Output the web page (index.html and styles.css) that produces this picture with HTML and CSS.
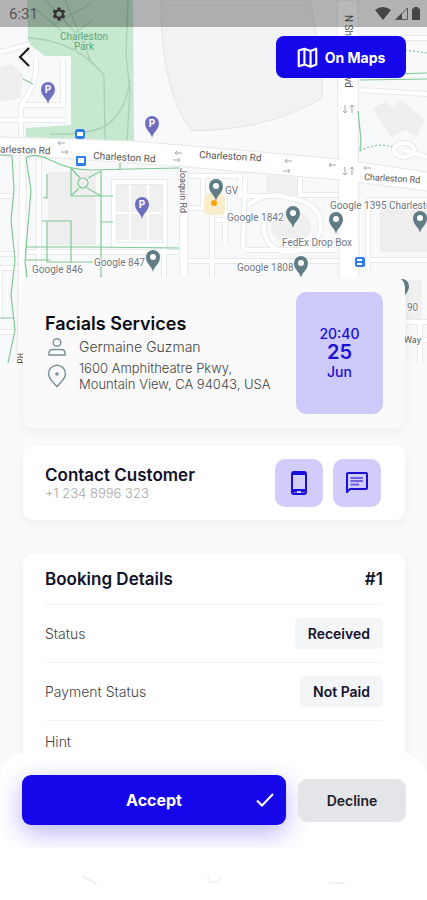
FILE: index.html
```html
<!DOCTYPE html>
<html lang="en">
<head>
<meta charset="UTF-8">
<meta name="viewport" content="width=device-width, initial-scale=1.0">
<title>Booking Details</title>
<link rel="stylesheet" href="styles.css">
</head>
<body>
<div class="app">
    <main class="content">
        <svg class="map" viewBox="0 0 427 363" preserveAspectRatio="xMidYMin slice" aria-hidden="true">
            <rect width="427" height="363" fill="#f8f9fb"/>
            <!-- blocks -->
            <path d="M161 0 Q160 90 192 131 L213 130 Q275 126 322 98 L322 60 L310 0 Z" fill="#f1f2f4" stroke="#e3e4e6"/>
            <path d="M0 67 L12 64 L24 76 L20 98 L0 102 Z M48 172 h48 v73 h-48 Z M380 208 h47 v44 h-47 Z M373 108 l12 -6 l8 6 l8 -8 l24 20 l-8 16 l-12 -6 l-14 8 l-14 -22 Z" fill="#eeeeef"/>
            <rect x="116" y="184" width="46" height="56" fill="#f0f0f0"/>
            <ellipse cx="291" cy="227" rx="20" ry="17" fill="#efefef"/>
            <rect x="266" y="166" width="34" height="30" fill="#f1f1f1"/>
            <path d="M377 280 h45 v45 h-45 Z" fill="#eff1f1"/>
            <!-- park -->
            <path d="M27 0 H133 L134 141 L26 137 V128 L71 125 V56 H45 L28 43 Z" fill="#c5e8cf"/>
            <g fill="none" stroke="#a9cfb4" stroke-width="1.3">
                <path d="M28 38 Q75 40 104 75 L105 141 M128 0 L126 55 L130 90 L127 141 M130 80 C126 110 112 126 95 130 Q75 135 50 134"/>
                <path d="M35 8 L80 47 M45 0 L88 46 M65 0 L92 64 M55 24 L90 4 M70 36 L93 20"/>
            </g>
            <!-- small roads -->
            <g fill="none" stroke="#e9eaec" stroke-width="6">
                <path d="M0 52 L30 44 M36 58 Q38 85 21 105 V136 M21 105 H63 V60 M0 120 H65 M21 120 H66"/>
                <path d="M39 158 V277 M0 196 H14 M0 254 H18 M0 268 H22 M0 332 H18 M26 252 H180 M0 270 V318"/>
                <path d="M114 182 H165 V245 H114 Z M164 245 V277 M187 208 H212 V277 M189 261 H340 M203 176 V208 M187 176 H240 V196 H280"/>
                <path d="M248 205 Q268 190 288 198 Q322 202 321 228 Q316 252 286 252 Q260 248 264 214 M245 180 L243 248 M245 250 H336 M225 196 V245 M215 220 H243 M300 170 V195 H338 M300 170 H242"/>
                <path d="M366 200 H427 M368 198 V272 M360 260 H427 M360 90 L427 94 M358 38 H427 M404 150 L427 157 M404 281 V340 M420 322 V363 M404 340 H427 M405 322 H427"/>
                <ellipse cx="404" cy="150" rx="10" ry="7"/>
            </g>
            <g fill="none" stroke="#fff" stroke-width="4">
                <path d="M0 52 L30 44 M36 58 Q38 85 21 105 V136 M21 105 H63 V60 M0 120 H65 M21 120 H66"/>
                <path d="M39 158 V277 M0 196 H14 M0 254 H18 M0 268 H22 M0 332 H18 M26 252 H180 M0 270 V318"/>
                <path d="M114 182 H165 V245 H114 Z M164 245 V277 M187 208 H212 V277 M189 261 H340 M203 176 V208 M187 176 H240 V196 H280"/>
                <path d="M248 205 Q268 190 288 198 Q322 202 321 228 Q316 252 286 252 Q260 248 264 214 M245 180 L243 248 M245 250 H336 M225 196 V245 M215 220 H243 M300 170 V195 H338 M300 170 H242"/>
                <path d="M366 200 H427 M368 198 V272 M360 260 H427 M360 90 L427 94 M358 38 H427 M404 150 L427 157 M404 281 V340 M420 322 V363 M404 340 H427 M405 322 H427"/>
                <ellipse cx="404" cy="150" rx="10" ry="7"/>
            </g>
            <path d="M130 185 V240 M148 185 V240 M116 213 H162" stroke="#fff" stroke-width="1.5"/>
            <!-- main roads -->
            <path d="M0 137 L134 141 L340 159 L427 172 V191 L340 180 L187 167 L0 154 Z M337 0 H358 L359 290 H339 Z M20 154 H26 V363 H17 Z M179 166 H188 V290 H180 Z" fill="#fff" stroke="#e6e7ea"/>
            <path d="M0 138 L134 142 L340 160 L427 173 V190 L340 179 L187 166 L0 153 Z M340 150 H358 V190 H340 Z" fill="#fff"/>
            <!-- footpaths -->
            <g fill="none" stroke="#81c995" stroke-width="1.2">
                <path d="M0 155 L12 156 L14 190 L11 220 L15 260 L11 295 L15 330 L8 363 M0 318 H14"/>
                <path d="M26 158 L31 190 L28 225 L25 262 L27 277 M26 158 Q34 152 50 160 Q70 170 90 170 L130 169 L179 168"/>
                <path d="M71 168 L80 178 M101 171 L88 178 M71 168 V196 H113 M71 196 L79 188 M101 196 L87 188 M101 171 V277 M42 221 H71 V263 M47 174 V198 L43 197 M47 221 V262 H93 M26 247 H90 L179 248 M26 260 H50 M101 222 H113 M120 163 V170"/>
                <circle cx="83" cy="183" r="5"/>
                <path d="M23 79 L33 84 M358 111 L361 140 L360 151 M355 75 L427 73 M360 80 L427 79"/>
                <path d="M360 151 Q376 142 392 147 M405 50 L427 53" stroke-dasharray="2 2"/>
            </g>
            <!-- one way arrows -->
            <g fill="none" stroke="#a3a7b4">
                <path d="M65 143 H58 l2 -2 m-2 2 l2 2 M61 152 h7 l-2 -2 m2 2 l-2 2 M182 153 h-7 l2 -2 m-2 2 l2 2 M173 160 h7 l-2 -2 m2 2 l-2 2 M292 161 h-7 l2 -2 m-2 2 l2 2 M283 171 h7 l-2 -2 m2 2 l-2 2 M336 165 h-7 l2 -2 m-2 2 l2 2 M371 168 h-7 l2 -2 m-2 2 l2 2"/>
                <path d="M345 105 v8 l-2 -2 m2 2 l2 -2 M352 113 v-8 l-2 2 m2 -2 l2 2 M345 167 v8 l-2 -2 m2 2 l2 -2 M352 175 v-8 l-2 2 m2 -2 l2 2"/>
            </g>
            <rect x="204" y="194" width="21" height="21" rx="5" fill="#f9edcc"/>
            <circle cx="214" cy="203" r="3" fill="#f4a60b"/>
            <!-- labels -->
            <g class="park-label">
                <text x="84" y="40">Charleston</text>
                <text x="84" y="50">Park</text>
            </g>
            <g class="road-label">
                <text transform="translate(-12 152) rotate(2)">Charleston Rd</text>
                <text transform="translate(93 159) rotate(3)">Charleston Rd</text>
                <text transform="translate(199 158) rotate(3)">Charleston Rd</text>
                <text class="small" transform="translate(364 180) rotate(3)">Charleston Rd</text>
                <text transform="translate(345 15) rotate(90)">N Shoreline Blvd</text>
                <text class="small" transform="translate(180 168) rotate(90)">Joaquin Rd</text>
                <text class="small" transform="translate(17 353) rotate(90)">Rd</text>
                <text class="small" x="404" y="343">Way</text>
            </g>
            <g class="place-label">
                <text x="225" y="194">GV</text>
                <text x="227" y="221">Google 1842</text>
                <text x="282" y="246">FedEx Drop Box</text>
                <text x="330" y="209">Google 1395 Charleston</text>
                <text x="237" y="271">Google 1808</text>
                <text x="94" y="266">Google 847</text>
                <text x="32" y="273">Google 846</text>
                <text x="407" y="311">90</text>
            </g>
            <!-- pins -->
            <defs>
                <path id="pin" d="M0 12 C-1 6 -7 4 -7 -3 A7 7 0 0 1 7 -3 C7 4 1 6 0 12 Z"/>
            </defs>
            <g fill="#6f6fc0">
                <use href="#pin" x="48" y="92"/>
                <use href="#pin" x="152" y="126"/>
                <use href="#pin" x="142" y="207"/>
            </g>
            <g class="pin-letter">
                <text x="48" y="93">P</text>
                <text x="152" y="127">P</text>
                <text x="142" y="208">P</text>
            </g>
            <g fill="#607d86">
                <use href="#pin" x="216" y="189"/>
                <use href="#pin" x="293" y="216"/>
                <use href="#pin" x="336" y="222"/>
                <use href="#pin" x="420" y="221"/>
                <use href="#pin" x="301" y="266"/>
                <use href="#pin" x="153" y="260"/>
                <use href="#pin" x="402" y="289"/>
            </g>
            <g fill="#fff">
                <circle cx="216" cy="186" r="3"/>
                <circle cx="293" cy="213" r="3"/>
                <circle cx="336" cy="219" r="3"/>
                <circle cx="420" cy="218" r="3"/>
                <circle cx="301" cy="263" r="3"/>
                <circle cx="153" cy="257" r="3"/>
            </g>
            <!-- transit stops -->
            <g fill="#2f7de9">
                <rect x="75" y="129" width="10" height="10" rx="3"/>
                <rect x="76" y="156" width="10" height="10" rx="1"/>
                <rect x="355" y="257" width="10" height="10" rx="2"/>
            </g>
            <path d="M77 132 h6 v4 h-6 Z M78 158 h6 v5 h-6 Z M357 259 h5 v2 h-5 Z M357 263 h5 v2 h-5 Z" fill="#fff"/>
        </svg>

        <div class="status-bar">
            <span class="time">6:31</span>
            <svg width="14" height="14" viewBox="0 0 24 24" fill="#333" fill-rule="evenodd">
                <path d="M9.500 1h5l.6 3.300 2 1.200 3.200-1.200 2.500 4.400-2.600 2.100v2.400l2.600 2.100-2.500 4.400-3.200-1.200-2 1.200-.6 3.300h-5l-.6-3.300-2-1.200-3.200 1.200-2.500-4.400 2.600-2.100v-2.400L1.200 8.700l2.500-4.400 3.200 1.200 2-1.200Z M12 7.500a4.500 4.500 0 1 0 0 9 4.500 4.500 0 0 0 0-9Z"/>
            </svg>
            <div class="signals">
                <svg width="16" height="13" viewBox="0 0 16 13" fill="#444"><path d="M0 3 Q8 -3 16 3 L8 13 Z"/></svg>
                <svg width="13" height="13" viewBox="0 0 13 13"><path d="M0 13 L7 6 V13 Z" fill="#444"/><path d="M1 12.500 L12.500 1 V12.500 Z" fill="none" stroke="#555"/></svg>
                <svg width="8" height="13" viewBox="0 0 8 13" fill="#444"><path d="M2 0 H6 V1.500 H8 V13 H0 V1.500 H2 Z"/></svg>
            </div>
        </div>

        <header class="top-bar">
            <button class="back-button" aria-label="Back">
                <svg width="12" height="20" viewBox="0 0 12 20" fill="none" stroke="#111" stroke-width="2"><path d="M11 1 L2 10 L11 19"/></svg>
            </button>
            <button class="maps-button">
                <svg width="21" height="21" viewBox="0 0 24 24" fill="none" stroke="#fff" stroke-width="2.500" stroke-linejoin="round"><path d="M2 4 L8.500 2 L15.500 4.500 L22 2 V20 L15.500 22.500 L8.500 20 L2 22 Z M8.500 2 V20 M15.500 4.500 V22.500"/></svg>
                On Maps
            </button>
        </header>

        <section class="card service-card">
            <div class="service-info">
                <h1>Facials Services</h1>
                <div class="info-row">
                    <svg width="20" height="20" viewBox="0 0 20 20" fill="none" stroke="#7b929b" stroke-width="1.500"><circle cx="10" cy="5.500" r="3.800"/><path d="M2 18 V16 Q2 12.500 6 12.500 H14 Q18 12.500 18 16 V18 Z"/></svg>
                    <span class="customer-name">Germaine Guzman</span>
                </div>
                <div class="info-row">
                    <svg width="20" height="24" viewBox="0 0 20 24" fill="none" stroke="#7b929b" stroke-width="1.500"><path d="M10 22.500 C7 19 1.500 15 1.500 9.800 A8.500 8.500 0 0 1 18.500 9.800 C18.500 15 13 19 10 22.500 Z"/><circle cx="10" cy="10" r="1.800" fill="#7b929b" stroke="none"/></svg>
                    <span>1600 Amphitheatre Pkwy,<br>Mountain View, CA 94043, USA</span>
                </div>
            </div>
            <div class="date-box">
                <span>20:40</span>
                <strong>25</strong>
                <span>Jun</span>
            </div>
        </section>

        <section class="card contact-card">
            <div class="contact-info">
                <h2>Contact Customer</h2>
                <p>+1 234 8996 323</p>
            </div>
            <button class="icon-button" aria-label="Call">
                <svg width="24" height="26" viewBox="0 0 24 26" fill="none" stroke="#1b0ed6" stroke-width="2"><rect x="5" y="2" width="14" height="22" rx="2"/><path d="M5 4 H19 M5 20 H19" /><path d="M6 21.500 H10 M14 21.500 H18"/></svg>
            </button>
            <button class="icon-button" aria-label="Message">
                <svg width="24" height="24" viewBox="0 0 24 24" fill="none" stroke="#1b0ed6" stroke-width="2" stroke-linejoin="round"><path d="M2 21 V3 Q2 2 3 2 H21 Q22 2 22 3 V17 Q22 18 21 18 H5 Z"/><path d="M5.500 7 H18 M5.500 10 H18 M5.500 13.500 H14" stroke="#6b62e0"/></svg>
            </button>
        </section>

        <section class="card booking-card">
            <div class="booking-header">
                <h2>Booking Details</h2>
                <h2>#1</h2>
            </div>
            <div class="booking-row">
                <span>Status</span>
                <span class="badge">Received</span>
            </div>
            <div class="booking-row">
                <span>Payment Status</span>
                <span class="badge">Not Paid</span>
            </div>
            <div class="booking-row hint-row">
                <span>Hint</span>
            </div>
        </section>
    </main>

    <footer class="actions">
        <button class="accept-button">
            <span>Accept</span>
            <svg width="18" height="14" viewBox="0 0 18 14" fill="none" stroke="#fff" stroke-width="2"><path d="M1 7.500 L6 12.500 L17 1"/></svg>
        </button>
        <button class="decline-button">Decline</button>
    </footer>

    <div class="system-nav">
        <svg width="16" height="10" viewBox="0 0 16 10"><path d="M0 1 L15 9"/></svg>
        <svg width="16" height="10" viewBox="0 0 16 10"><path d="M2 2 Q2 7 6 7 H10 Q14 7 14 2"/></svg>
        <svg width="16" height="10" viewBox="0 0 16 10"><path d="M0 7 Q0 8 2 8 H14 Q16 8 16 7"/></svg>
    </div>
</div>
</body>
</html>
```
FILE: styles.css
```css
* {
    box-sizing: border-box;
}

body {
    margin: 0;
    font-family: Inter, sans-serif;
    font-size: 14px;
    color: #12122b;
    background-color: #fafafa;
}

h1, h2, p {
    margin: 0;
}

h1, h2 {
    font-size: 17px;
    line-height: 20px;
    font-weight: 600;
}

h1 {
    font-size: 18px;
    color: #0b0b14;
}

button {
    border: none;
    padding: 0;
    font-family: inherit;
    cursor: pointer;
}

svg {
    display: block;
    flex-shrink: 0;
}

.app {
    display: flex;
    flex-direction: column;
    height: 100vh;
}

.content {
    position: relative;
    flex: 1;
    min-height: 0;
    margin-bottom: -28px;
    overflow-y: auto;
    scrollbar-width: none;
}

/* map lies behind the header and the first card */
.map {
    position: absolute;
    top: 0;
    left: 0;
    width: 100%;
    height: 363px;
    z-index: -1;
}

.map text {
    font-family: Roboto, sans-serif;
    font-size: 10px;
    fill: #6f7680;
    stroke: #fff;
    stroke-width: 2px;
    paint-order: stroke;
}

.map .road-label text {
    fill: #555;
}

.map .road-label .small {
    font-size: 9px;
}

.map .park-label text {
    fill: #5fa779;
    stroke: #c5e8cf;
    text-anchor: middle;
}

.map .pin-letter text {
    fill: #fff;
    stroke: none;
    font-weight: 700;
    text-anchor: middle;
}

.status-bar {
    display: flex;
    align-items: center;
    gap: 14px;
    height: 27px;
    padding: 0 7px 0 9px;
    background-color: rgba(0, 0, 0, 0.28);
}

.time {
    font-family: Roboto, sans-serif;
    font-size: 15px;
    color: #555;
}

.signals {
    display: flex;
    gap: 4px;
    margin-left: auto;
}

.top-bar {
    display: flex;
    justify-content: space-between;
    align-items: center;
    padding: 9px 21px 0 18px;
    margin-bottom: 199px;
}

.back-button {
    background: none;
}

.maps-button {
    display: flex;
    justify-content: center;
    align-items: center;
    gap: 7px;
    width: 130px;
    height: 42px;
    border-radius: 8px;
    background-color: #1607ea;
    color: #fff;
    font-size: 14px;
    font-weight: 700;
}

.card {
    margin: 0 22px 18px 23px;
    padding: 0 22px;
    border-radius: 10px;
    background-color: #fff;
    box-shadow: 0 4px 12px rgba(0, 0, 0, 0.05);
}

.service-card {
    display: flex;
    justify-content: space-between;
    align-items: center;
    gap: 10px;
    min-height: 151px;
    background-color: #fafafa;
}

.service-info {
    flex: 1;
    white-space: nowrap;
}

.info-row {
    display: flex;
    align-items: center;
    gap: 12px;
    margin-top: 3px;
    padding-left: 2px;
    line-height: 16px;
    font-size: 13px;
    font-weight: 300;
    color: #444;
}

.customer-name {
    font-size: 14px;
}

.date-box {
    display: flex;
    flex-direction: column;
    align-items: center;
    justify-content: center;
    width: 87px;
    height: 122px;
    flex-shrink: 0;
    border-radius: 10px;
    background-color: #cdc9f9;
    color: #1b0ed6;
    font-size: 14px;
    font-weight: 500;
    line-height: 19px;
}

.date-box strong {
    font-size: 20px;
    font-weight: 600;
}

.contact-card {
    display: flex;
    align-items: center;
    gap: 10px;
    min-height: 74px;
    margin-bottom: 34px;
    padding-right: 24px;
}

.contact-info {
    flex: 1;
}

.contact-info p {
    font-size: 13px;
    line-height: 16px;
    font-weight: 300;
    color: #a5a8ad;
}

.icon-button {
    display: flex;
    justify-content: center;
    align-items: center;
    width: 48px;
    height: 48px;
    border-radius: 10px;
    background-color: #d1ccfa;
}

.booking-header,
.booking-row {
    display: flex;
    justify-content: space-between;
    align-items: center;
}

.booking-header {
    height: 50px;
}

.booking-row {
    height: 58px;
    border-top: 1px solid #f4f4f6;
    font-weight: 300;
    color: #444;
}

.hint-row {
    height: 42px;
}

.badge {
    padding: 0 13px;
    border-radius: 5px;
    background-color: #f4f5f7;
    color: #12122b;
    font-size: 14px;
    font-weight: 600;
    line-height: 31px;
}

.actions {
    position: relative;
    display: flex;
    align-items: center;
    gap: 12px;
    height: 96px;
    padding: 0 21px 0 22px;
    overflow: hidden;
    border-radius: 28px 28px 0 0;
    background-color: #fff;
}

.accept-button {
    display: flex;
    align-items: center;
    flex: 1;
    height: 50px;
    padding: 0 12px 0 30px;
    border-radius: 9px;
    background-color: #1607ea;
    box-shadow: 0 8px 26px rgba(22, 7, 234, 0.3);
    color: #fff;
    font-size: 16px;
    font-weight: 700;
}

.accept-button span {
    flex: 1;
}

.decline-button {
    width: 108px;
    height: 43px;
    border-radius: 9px;
    background-color: #e4e5e9;
    color: #1c1c26;
    font-size: 14px;
    font-weight: 600;
}

.system-nav {
    position: relative;
    display: flex;
    justify-content: space-between;
    align-items: center;
    height: 52px;
    padding: 12px 82px 0;
    background-color: #fff;
}

.system-nav path {
    fill: none;
    stroke: #f3f3f3;
    stroke-width: 2px;
}
```
